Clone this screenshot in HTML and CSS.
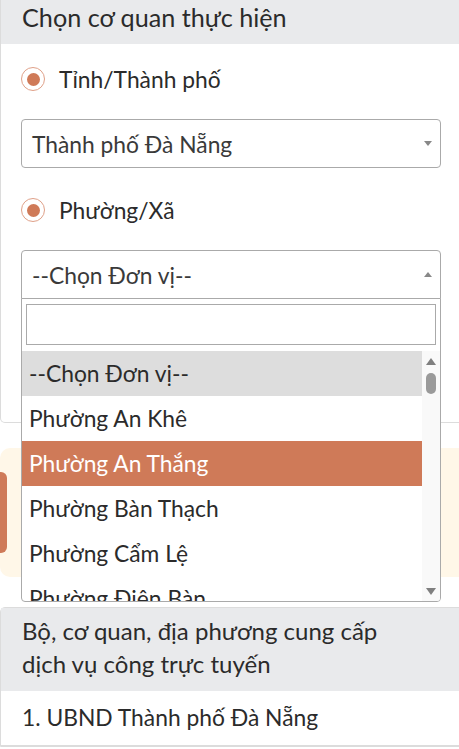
FILE: index.html
```html
<!DOCTYPE html>
<html lang="vi">
<head>
<meta charset="utf-8">
<title>Chọn cơ quan thực hiện</title>
<link rel="stylesheet" href="styles.css">
</head>
<body>
<div class="page">
  <section class="card">
    <div class="card-head">Chọn cơ quan thực hiện</div>
    <div class="card-body">
      <label class="radio-row first">
        <span class="radio"><span class="dot"></span></span>
        <span class="radio-label">Tỉnh/Thành phố</span>
      </label>
      <div class="select">
        <span class="select-text">Thành phố Đà Nẵng</span>
        <span class="caret down"></span>
      </div>
      <label class="radio-row">
        <span class="radio"><span class="dot"></span></span>
        <span class="radio-label">Phường/Xã</span>
      </label>
      <div class="select-wrap">
        <div class="select open">
          <span class="select-text">--Chọn Đơn vị--</span>
          <span class="caret up"></span>
        </div>
        <div class="dropdown">
          <div class="search-box"><input class="search" type="text"></div>
          <div class="list-area">
            <ul class="options">
              <li class="option selected">--Chọn Đơn vị--</li>
              <li class="option">Phường An Khê</li>
              <li class="option highlighted">Phường An Thắng</li>
              <li class="option">Phường Bàn Thạch</li>
              <li class="option">Phường Cẩm Lệ</li>
              <li class="option">Phường Điện Bàn</li>
            </ul>
            <div class="scrollbar">
              <span class="sb-arrow sb-up"></span>
              <span class="sb-thumb"></span>
              <span class="sb-fill"></span>
              <span class="sb-arrow sb-down"></span>
            </div>
          </div>
        </div>
      </div>
    </div>
  </section>

  <div class="notice">
    <span class="notice-tab"></span>
  </div>

  <section class="card card-list">
    <div class="card-head two-line">Bộ, cơ quan, địa phương cung cấp dịch vụ công trực tuyến</div>
    <div class="list-row">1. UBND Thành phố Đà Nẵng</div>
  </section>
</div>
</body>
</html>
```

FILE: styles.css
```css
html, body {
  margin: 0;
  padding: 0;
  background: #ffffff;
  overflow: hidden;
}

body {
  font-family: "Lato", "Noto Sans", sans-serif;
  color: #2b2b2b;
}

.page {
  width: 470px;
}

.card {
  border: 1px solid #dcdcdc;
  border-top: 0;
  border-radius: 0 0 0 5px;
  background: #ffffff;
}

.card-head {
  background: #e9eaec;
  height: 44px;
  box-sizing: border-box;
  padding: 0 21px;
  font-size: 25.2px;
  line-height: 35px;
  color: #2b2b2b;
}

.card-body {
  padding: 0 28px 123px 20px;
}

.radio-row {
  display: flex;
  align-items: center;
  height: 24px;
  margin-top: 30px;
}

.radio-row.first {
  margin-top: 23px;
}

.radio {
  width: 24px;
  height: 24px;
  box-sizing: border-box;
  border: 1.5px solid #dfa088;
  border-radius: 50%;
  display: flex;
  align-items: center;
  justify-content: center;
  flex: none;
}

.dot {
  width: 13px;
  height: 13px;
  border-radius: 50%;
  background: #cf7a58;
}

.radio-label {
  margin-left: 14px;
  font-size: 22.8px;
  color: #2b2b2b;
}

.select {
  margin-top: 28px;
  height: 49px;
  box-sizing: border-box;
  border: 1px solid #aaaaaa;
  border-radius: 4px;
  display: flex;
  align-items: center;
  justify-content: space-between;
  padding: 0 8px 0 10px;
  font-size: 22.8px;
  color: #3a3a3a;
}

.select-wrap {
  position: relative;
  margin-top: 28px;
}

.select-wrap .select {
  margin-top: 0;
  border-radius: 4px 4px 0 0;
}

.caret {
  width: 0;
  height: 0;
  border-left: 4px solid transparent;
  border-right: 4px solid transparent;
}

.caret.down {
  border-top: 5px solid #888888;
}

.caret.up {
  border-bottom: 5px solid #888888;
}

.dropdown {
  position: absolute;
  top: 48px;
  left: 0;
  right: 0;
  height: 304px;
  box-sizing: border-box;
  border: 1px solid #aaaaaa;
  border-radius: 0 0 4px 4px;
  background: #ffffff;
  display: flex;
  flex-direction: column;
  overflow: hidden;
  z-index: 5;
}

.search-box {
  padding: 5px 4px 6px 4px;
}

.search {
  display: block;
  width: 100%;
  height: 41px;
  box-sizing: border-box;
  border: 1px solid #aaaaaa;
  margin: 0;
  padding: 0 6px;
  font: inherit;
  outline: none;
}

.list-area {
  flex: 1;
  display: flex;
  min-height: 0;
}

.options {
  list-style: none;
  margin: 0;
  padding: 0;
  flex: 1;
  overflow: hidden;
}

.option {
  height: 45px;
  line-height: 45px;
  padding-left: 7px;
  font-size: 22.8px;
  color: #2b2b2b;
  white-space: nowrap;
}

.option.selected {
  background: #dddddd;
}

.option.highlighted {
  background: #cf7a58;
  color: #ffffff;
}

.scrollbar {
  width: 18px;
  flex: none;
  background: #f9f9f9;
  display: flex;
  flex-direction: column;
  align-items: center;
  padding: 7px 0 6px;
  box-sizing: border-box;
}

.sb-arrow {
  width: 0;
  height: 0;
  border-left: 5px solid transparent;
  border-right: 5px solid transparent;
}

.sb-up {
  border-bottom: 7px solid #7f7f7f;
}

.sb-down {
  border-top: 7px solid #7f7f7f;
}

.sb-thumb {
  width: 10px;
  height: 21px;
  margin-top: 8px;
  border-radius: 5px;
  background: #9a9a9a;
}

.sb-fill {
  flex: 1;
}

.notice {
  margin-top: 25px;
  height: 129px;
  background: #fff7e8;
  border-radius: 10px 0 0 10px;
  padding-top: 24px;
  box-sizing: border-box;
}

.notice-tab {
  display: block;
  width: 7px;
  height: 81px;
  background: #cf7a58;
  border-radius: 0 6px 6px 0;
}

.card-list {
  margin-top: 30px;
  border-top: 1px solid #dcdcdc;
  border-radius: 5px 0 0 0;
}

.card-head.two-line {
  height: auto;
  width: 459px;
  padding: 6px 40px 11px 21px;
  font-size: 24px;
  line-height: 33px;
}

.list-row {
  padding: 0 21px 3px;
  height: 55px;
  box-sizing: border-box;
  line-height: 52px;
  font-size: 22.8px;
  color: #2b2b2b;
  border-bottom: 1px solid #dcdcdc;
}
```
